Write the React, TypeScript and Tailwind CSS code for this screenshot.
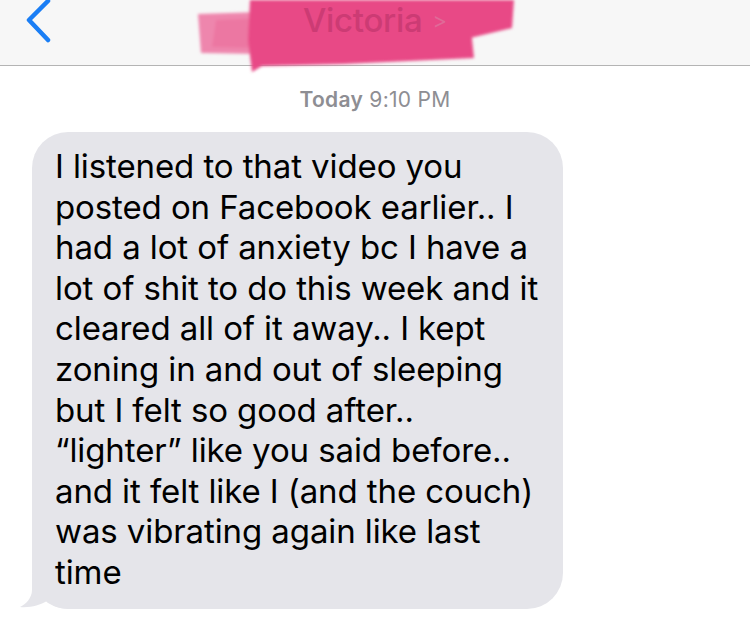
import React from 'react';

const lines = [
    'I listened to that video you',
    'posted on Facebook earlier.. I',
    'had a lot of anxiety bc I have a',
    'lot of shit to do this week and it',
    'cleared all of it away.. I kept',
    'zoning in and out of sleeping',
    'but I felt so good after..',
    '\u201Clighter\u201D like you said before..',
    'and it felt like I (and the couch)',
    'was vibrating again like last',
    'time',
];

const Scribble = () => (
    <svg className="absolute left-0 top-0" width="750" height="80" viewBox="0 0 750 80">
        <defs>
            <filter id="soft" x="-10%" y="-20%" width="120%" height="140%">
                <feGaussianBlur stdDeviation="1.4" />
            </filter>
        </defs>
        <g filter="url(#soft)">
            <path d="M198 14 L262 12 L264 54 L201 53 Z" fill="#ee86ad" />
            <path d="M216 20 L262 18 L262 48 L212 47 Z" fill="#ec77a2" />
            <path d="M250 0 L468 0 L474 58 L344 64 L262 66 L252 72 L248 40 Z" fill="#e84a86" />
            <path d="M378 0 L514 0 L512 28 L470 38 L380 30 Z" fill="#e84a86" />
        </g>
    </svg>
);

const App = () => {
    return (
        <div className="w-[750px] h-[631px] overflow-hidden bg-white font-['Inter','Liberation_Sans',sans-serif]">
            {/* Nav bar */}
            <div className="relative h-[66px] bg-[#f7f7f7] border-b border-[#b4b4b4]">
                <svg className="absolute left-[24px] -top-[2px]" width="30" height="46" viewBox="0 0 30 46">
                    <path d="M24 3 L5 22 L24 42" fill="none" stroke="#1a7ef5" strokeWidth="4.5" strokeLinecap="round" strokeLinejoin="round" />
                </svg>
                <Scribble />
                <div className="absolute left-[303px] top-[1px] flex items-center gap-[10px]">
                    <span className="text-[33px] leading-[38px] font-medium text-[#cc3b74] tracking-[-0.3px]">Victoria</span>
                    <span className="text-[22px] leading-[38px] text-[#e06a98]">&gt;</span>
                </div>
            </div>

            {/* Timestamp */}
            <div className="mt-[21px] text-center text-[21px] leading-[26px] tracking-[0.3px] text-[#8e8e93]">
                <span className="font-semibold">Today</span> 9:10 PM
            </div>

            {/* Bubble */}
            <div className="relative ml-[32px] mt-[19px] w-[531px] rounded-[36px] bg-[#e5e5ea] pl-[23px] pt-[14px] pb-[16px]">
                <p className="relative z-10 text-[33px] leading-[40.6px] text-black tracking-[-0.1px]">
                    {lines.map((l) => (
                        <span key={l} className="block whitespace-nowrap">{l}</span>
                    ))}
                </p>
                <svg className="absolute -left-[12px] bottom-0" width="50" height="35" viewBox="0 0 50 35">
                    <path d="M12 0 L12 16 C12 24 6 30 0 33 C10 34 20 31 27 27 C33 32 40 35 50 35 L50 0 Z" fill="#e5e5ea" />
                </svg>
            </div>
        </div>
    );
};

export default App;
